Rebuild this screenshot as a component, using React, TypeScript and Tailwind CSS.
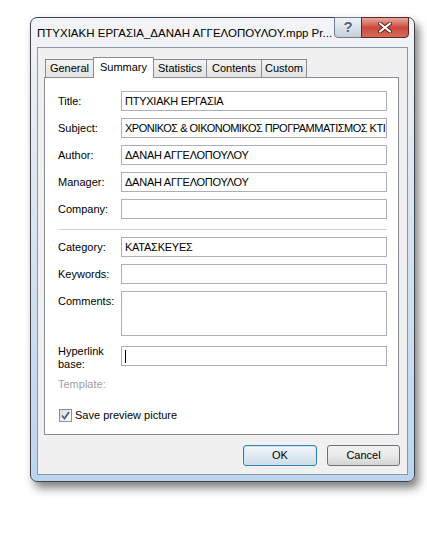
import React from 'react';

const FONT = { fontFamily: '"Segoe UI", "Liberation Sans", Arial, sans-serif' };

const TextRow: React.FC<{ label: string; value?: string; tight?: boolean }> = ({ label, value, tight }) => (
  <div className="flex items-center h-[20px]">
    <span className="w-[63px] shrink-0">{label}</span>
    <div
      className={`w-[266px] h-[20px] border border-[#a9b0b8] bg-white pl-[3px] flex items-center overflow-hidden whitespace-nowrap ${
        tight ? 'tracking-[-0.5px]' : 'tracking-[-0.25px]'
      }`}
    >
      {value}
    </div>
  </div>
);

function TitleButtons() {
  return (
    <div className="flex ml-auto mr-[5px] -mt-px">
      <div className="w-[28px] h-[21px] rounded-bl-[4px] border border-[#6e7c8c] bg-linear-to-b from-[#eef2f6] via-[#d9e2eb] to-[#c3cfdb] flex items-center justify-center text-[15px] font-bold text-[#51637a] [text-shadow:0_0_2px_#fff]">
        ?
      </div>
      <div className="w-[48px] h-[21px] -ml-px rounded-br-[4px] border border-[#5a2a26] bg-linear-to-b from-[#e7a99e] via-[#c94a3d] to-[#d66a58] flex items-center justify-center">
        <svg width="14" height="11" viewBox="0 0 14 11">
          <path d="M2 1.5 L12 9.5 M12 1.5 L2 9.5" stroke="#5b1f1a" strokeWidth="4" strokeLinecap="round" />
          <path d="M2 1.5 L12 9.5 M12 1.5 L2 9.5" stroke="#ffffff" strokeWidth="2.2" strokeLinecap="round" />
        </svg>
      </div>
    </div>
  );
}

function Tabs() {
  const tab = 'h-[18px] -ml-px border border-b-0 border-[#898c95] bg-linear-to-b from-[#f3f3f3] to-[#e3e3e3] flex items-center justify-center';
  return (
    <div className="flex items-end h-[20px] pl-px relative z-10">
      <div className={`w-[49px] ml-0 ${tab}`}>General</div>
      <div className="w-[61px] h-[21px] -ml-px -mb-px border border-b-0 border-[#898c95] bg-white flex items-start justify-center pt-[1px]">
        Summary
      </div>
      <div className={`w-[54px] ${tab}`}>Statistics</div>
      <div className={`w-[56px] ${tab}`}>Contents</div>
      <div className={`w-[46px] ${tab}`}>Custom</div>
    </div>
  );
}

export default function App() {
  return (
    <div className="w-[427px] h-[543px] bg-white pt-[17px] pl-[30px] text-[11px] text-black" style={FONT}>
      <div className="w-[385px] h-[465px] rounded-[7px] border border-[#3e444b] bg-linear-to-b from-[#f3f4f6] via-[#d4e2f0] to-[#bcd5ee] shadow-[4px_6px_10px_rgba(0,0,0,0.5)] flex flex-col">
        <div className="h-[29px] flex items-start pl-[6px] shrink-0">
          <span className="mt-[7px] text-[11.5px] whitespace-nowrap">ΠΤΥΧΙΑΚΗ ΕΡΓΑΣΙΑ_ΔΑΝΑΗ ΑΓΓΕΛΟΠΟΥΛΟΥ.mpp Pr...</span>
          <TitleButtons />
        </div>
        <div className="mx-[6px] mb-[6px] flex-1 bg-[#f0f0f0] border border-[#8b97a4] pt-[9px] px-[6px] flex flex-col">
          <Tabs />
          <div className="w-[355px] h-[358px] border border-[#898c95] bg-white pt-[13px] pl-[13px] flex flex-col">
            <div className="flex flex-col gap-[7px]">
              <TextRow label="Title:" value="ΠΤΥΧΙΑΚΗ ΕΡΓΑΣΙΑ" />
              <TextRow label="Subject:" value="ΧΡΟΝΙΚΟΣ & ΟΙΚΟΝΟΜΙΚΟΣ ΠΡΟΓΡΑΜΜΑΤΙΣΜΟΣ ΚΤΙ" tight />
              <TextRow label="Author:" value="ΔΑΝΑΗ ΑΓΓΕΛΟΠΟΥΛΟΥ" />
              <TextRow label="Manager:" value="ΔΑΝΑΗ ΑΓΓΕΛΟΠΟΥΛΟΥ" />
              <TextRow label="Company:" />
            </div>
            <div className="w-[329px] h-px bg-[#d5d5d5] mt-[10px] mb-[7px]" />
            <div className="flex flex-col gap-[7px]">
              <TextRow label="Category:" value="ΚΑΤΑΣΚΕΥΕΣ" />
              <TextRow label="Keywords:" />
              <div className="flex items-start">
                <span className="w-[63px] shrink-0 mt-[2px]">Comments:</span>
                <div className="w-[266px] h-[45px] border border-[#a9b0b8] bg-white" />
              </div>
            </div>
            <div className="flex items-start h-[20px] mt-[10px]">
              <span className="w-[63px] shrink-0 leading-[13px] -mt-px">Hyperlink<br />base:</span>
              <div className="w-[266px] h-[20px] border border-[#a9b0b8] bg-white pl-[3px] flex items-center">
                <span className="w-px h-[13px] bg-black" />
              </div>
            </div>
            <div className="mt-[11px] h-[14px] leading-[14px] text-[#a0a0a0]">Template:</div>
            <div className="mt-[16px] flex items-center ml-px">
              <div className="w-[13px] h-[13px] border border-[#8e8f8f] bg-linear-to-br from-[#dcdcdc] to-[#ffffff] flex items-center justify-center">
                <svg width="9" height="9" viewBox="0 0 9 9">
                  <path d="M1 4.5 L3.5 7.5 L8 1" fill="none" stroke="#4b5e8e" strokeWidth="1.8" />
                </svg>
              </div>
              <span className="ml-[3px]">Save preview picture</span>
            </div>
          </div>
          <div className="flex justify-end gap-[10px] mt-[10px] mr-[1px]">
            <div className="w-[74px] h-[21px] rounded-[3px] border border-[#3c7fb1] bg-linear-to-b from-[#f2f7fb] via-[#e0eaf2] to-[#cddbe7] shadow-[inset_0_0_0_1px_#c6e6f8] flex items-center justify-center">
              OK
            </div>
            <div className="w-[73px] h-[21px] rounded-[3px] border border-[#707070] bg-linear-to-b from-[#f2f2f2] via-[#e9e9e9] to-[#d4d4d4] flex items-center justify-center">
              Cancel
            </div>
          </div>
        </div>
      </div>
    </div>
  );
}
